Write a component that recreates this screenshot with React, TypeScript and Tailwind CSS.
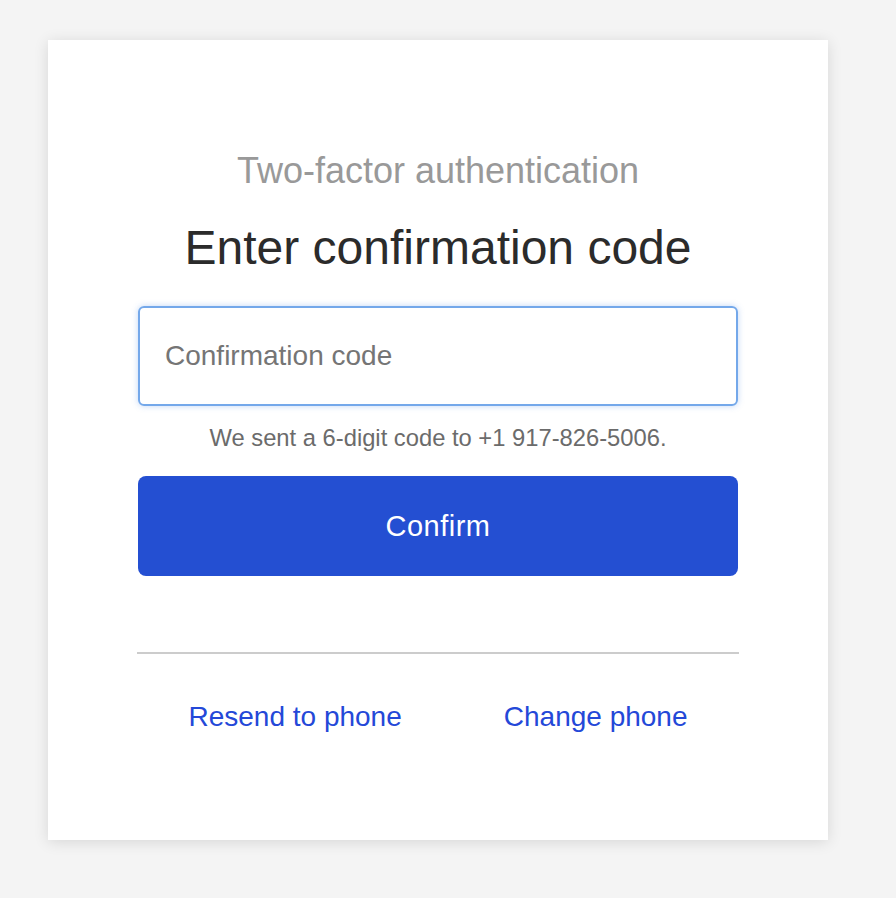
import { useState } from "react";

export default function App() {
  const [code, setCode] = useState("");

  return (
    <div className="min-h-[898px] bg-[#f4f4f4] pt-10 pl-12 font-['Liberation_Sans',Arial,sans-serif]">
      <div className="flex h-[800px] w-[780px] flex-col items-center bg-white pt-[109px] shadow-[0_2px_14px_rgba(0,0,0,0.12)]">
        <p className="text-[36px] leading-[1.2] text-[#999999]">
          Two-factor authentication
        </p>
        <h1 className="mt-[27px] text-[48px] leading-[1.2] text-[#2b2b2b]">
          Enter confirmation code
        </h1>

        <div className="mt-[29px] flex w-[600px] flex-col items-center">
          <input
            autoFocus
            value={code}
            onChange={(e) => setCode(e.target.value)}
            placeholder="Confirmation code"
            className="h-[100px] w-full rounded-md border-2 border-[#74a8ea] px-[25px] text-[28px] text-[#333] caret-[#333] placeholder:text-[#757575] outline-none shadow-[0_0_6px_rgba(80,140,230,0.35)]"
          />
          <p className="mt-[18px] text-[23.75px] leading-[1.2] text-[#6b6b6b]">
            We sent a 6-digit code to +1 917-826-5006.
          </p>
          <button
            type="button"
            className="mt-[24px] h-[100px] w-full rounded-lg bg-[#244fd2] text-[29px] tracking-[0.5px] text-white"
          >
            Confirm
          </button>

          <hr className="mt-[76px] w-[602px] border-t-2 border-[#cccccc]" />

          <div className="mt-[46px] flex w-full justify-center gap-[102px]">
            <a href="#" className="text-[28px] leading-[1.2] text-[#2448d8]">
              Resend to phone
            </a>
            <a href="#" className="text-[28px] leading-[1.2] text-[#2448d8]">
              Change phone
            </a>
          </div>
        </div>
      </div>
    </div>
  );
}
